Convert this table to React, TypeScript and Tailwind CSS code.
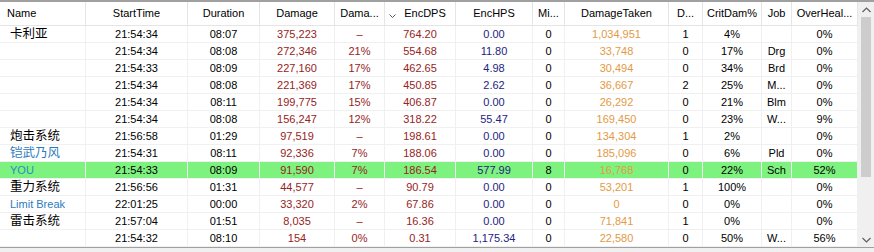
import React from "react";

type Row = {
  name: string;
  cjk?: boolean;
  nameColor?: string;
  start: string;
  dur: string;
  dmg: string;
  pct: string;
  dps: string;
  hps: string;
  mi: string;
  taken: string;
  d: string;
  crit: string;
  job: string;
  oh: string;
  you?: boolean;
};

const rows: Row[] = [
  { name: "卡利亚", cjk: true, start: "21:54:34", dur: "08:07", dmg: "375,223", pct: "–", dps: "764.20", hps: "0.00", mi: "0", taken: "1,034,951", d: "1", crit: "4%", job: "", oh: "0%" },
  { name: "", start: "21:54:34", dur: "08:08", dmg: "272,346", pct: "21%", dps: "554.68", hps: "11.80", mi: "0", taken: "33,748", d: "0", crit: "17%", job: "Drg", oh: "0%" },
  { name: "", start: "21:54:33", dur: "08:09", dmg: "227,160", pct: "17%", dps: "462.65", hps: "4.98", mi: "0", taken: "30,494", d: "0", crit: "34%", job: "Brd", oh: "0%" },
  { name: "", start: "21:54:34", dur: "08:08", dmg: "221,369", pct: "17%", dps: "450.85", hps: "2.62", mi: "0", taken: "36,667", d: "2", crit: "25%", job: "M...", oh: "0%" },
  { name: "", start: "21:54:34", dur: "08:11", dmg: "199,775", pct: "15%", dps: "406.87", hps: "0.00", mi: "0", taken: "26,292", d: "0", crit: "21%", job: "Blm", oh: "0%" },
  { name: "", start: "21:54:34", dur: "08:08", dmg: "156,247", pct: "12%", dps: "318.22", hps: "55.47", mi: "0", taken: "169,450", d: "0", crit: "23%", job: "W...", oh: "9%" },
  { name: "炮击系统", cjk: true, start: "21:56:58", dur: "01:29", dmg: "97,519", pct: "–", dps: "198.61", hps: "0.00", mi: "0", taken: "134,304", d: "1", crit: "2%", job: "", oh: "0%" },
  { name: "铠武乃风", cjk: true, nameColor: "text-[#2b7bbd]", start: "21:54:31", dur: "08:11", dmg: "92,336", pct: "7%", dps: "188.06", hps: "0.00", mi: "0", taken: "185,096", d: "0", crit: "6%", job: "Pld", oh: "0%" },
  { name: "YOU", nameColor: "text-[#2390c4]", you: true, start: "21:54:33", dur: "08:09", dmg: "91,590", pct: "7%", dps: "186.54", hps: "577.99", mi: "8", taken: "16,768", d: "0", crit: "22%", job: "Sch", oh: "52%" },
  { name: "重力系统", cjk: true, start: "21:56:56", dur: "01:31", dmg: "44,577", pct: "–", dps: "90.79", hps: "0.00", mi: "0", taken: "53,201", d: "1", crit: "100%", job: "", oh: "0%" },
  { name: "Limit Break", nameColor: "text-[#2b7bbd]", start: "22:01:25", dur: "00:00", dmg: "33,320", pct: "2%", dps: "67.86", hps: "0.00", mi: "0", taken: "0", d: "0", crit: "0%", job: "", oh: "0%" },
  { name: "雷击系统", cjk: true, start: "21:57:04", dur: "01:51", dmg: "8,035", pct: "–", dps: "16.36", hps: "0.00", mi: "0", taken: "71,841", d: "1", crit: "0%", job: "", oh: "0%" },
  { name: "", start: "21:54:32", dur: "08:10", dmg: "154", pct: "0%", dps: "0.31", hps: "1,175.34", mi: "0", taken: "22,580", d: "0", crit: "50%", job: "W...", oh: "56%" },
];

const grid =
  "grid grid-cols-[86px_102px_72px_75px_50px_71px_77px_32px_104px_34px_59px_30px_66px]";

const headers = [
  "Name",
  "StartTime",
  "Duration",
  "Damage",
  "Dama...",
  "EncDPS",
  "EncHPS",
  "Mi...",
  "DamageTaken",
  "D...",
  "CritDam%",
  "Job",
  "OverHeal...",
];

function Cell({ children, className = "" }: { children?: React.ReactNode; className?: string }) {
  return (
    <div className={"h-[17px] border-r border-b border-[#f0f0f0] text-center leading-[16px] whitespace-nowrap overflow-hidden " + className}>
      {children}
    </div>
  );
}

export default function App() {
  return (
    <div className="w-[874px] h-[252px] bg-white overflow-hidden font-['Liberation_Sans','Noto_Sans_CJK_SC',sans-serif] text-[11px] text-black">
      <div className="h-[2px] bg-[#a0a0a0]" />
      <div className="flex h-[245px]">
        <div className="w-[858px]">
          <div className={grid + " h-[24px] border-b border-[#e5e5e5]"}>
            {headers.map((h, i) => (
              <div
                key={h}
                className={
                  "relative flex items-center border-r border-[#e5e5e5] " +
                  (i === 0 ? "pl-[7px]" : i === 5 ? "justify-center pl-[10px]" : "justify-center")
                }
              >
                {i === 5 && (
                  <svg className="absolute left-[4px] top-[12px]" width="7" height="5" viewBox="0 0 7 5">
                    <path d="M0.5 0.5 L3.5 3.5 L6.5 0.5" fill="none" stroke="#555" strokeWidth="1" />
                  </svg>
                )}
                <span>{h}</span>
              </div>
            ))}
          </div>
          {rows.map((r, i) => (
            <div key={i} className={grid + (r.you ? " bg-[#7ef27e]" : "")}>
              <Cell className={"text-left pl-[10px] " + (r.cjk ? "text-[12.5px] " : "") + (r.nameColor ?? "")}>{r.name}</Cell>
              <Cell>{r.start}</Cell>
              <Cell>{r.dur}</Cell>
              <Cell className="text-[#962424]">{r.dmg}</Cell>
              <Cell className="text-[#962424]">{r.pct}</Cell>
              <Cell className="text-[#962424]">{r.dps}</Cell>
              <Cell className="text-[#24247e]">{r.hps}</Cell>
              <Cell>{r.mi}</Cell>
              <Cell className="text-[#e39a45]">{r.taken}</Cell>
              <Cell>{r.d}</Cell>
              <Cell>{r.crit}</Cell>
              <Cell>{r.job}</Cell>
              <Cell>{r.oh}</Cell>
            </div>
          ))}
        </div>
        <div className="w-[16px] flex flex-col bg-[#f0f0f0]">
          <div className="h-[15px] flex items-center justify-center">
            <svg width="9" height="6" viewBox="0 0 9 6">
              <path d="M0.5 5 L4.5 1 L8.5 5" fill="none" stroke="#606060" strokeWidth="1.2" />
            </svg>
          </div>
          <div className="h-[160px] mx-[3px] bg-[#cdcdcd]" />
          <div className="flex-1" />
          <div className="h-[15px] flex items-center justify-center">
            <svg width="9" height="6" viewBox="0 0 9 6">
              <path d="M0.5 1 L4.5 5 L8.5 1" fill="none" stroke="#606060" strokeWidth="1.2" />
            </svg>
          </div>
        </div>
      </div>
      <div className="h-[5px] border-t border-[#a0a0a0] bg-[#f0f0f0]" />
    </div>
  );
}
